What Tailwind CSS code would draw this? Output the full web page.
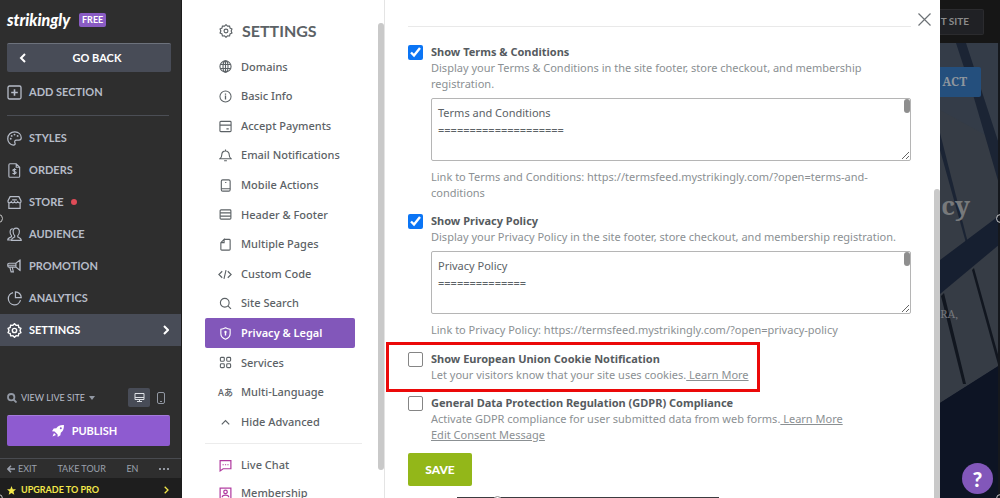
<!DOCTYPE html>
<html lang="en">
  <head>
    <meta charset="UTF-8" />
    <meta name="viewport" content="width=device-width, initial-scale=1.0" />
    <title>Settings - Privacy &amp; Legal</title>
    <script src="https://cdn.jsdelivr.net/npm/@tailwindcss/browser@4"></script>
  </head>
  <body class="relative flex h-screen overflow-hidden bg-white font-['Noto_Sans',sans-serif] text-[11px] text-[#5c6266]">
    <!-- Editor sidebar -->
    <aside class="flex w-[182px] shrink-0 flex-col border-r border-[#1c1c1c] bg-[#2e2e2e] font-['Lato',sans-serif] text-[11px] font-bold text-[#b6bcc8]">
      <header class="flex h-10 items-center gap-2 pl-[7px]">
        <span class="w-16 font-['Lato',sans-serif] text-[16px] font-black italic text-white">strikingly</span>
        <span class="rounded-xs bg-[#8a5cc4] px-[3px] text-[9px] leading-[14px] text-white">FREE</span>
      </header>
      <button class="relative mt-[3px] ml-[7px] h-[29px] w-[164px] rounded-xs border-t border-[#6d727c] bg-[#484c57] pl-4 text-white">
        <svg class="absolute top-[9px] left-3 h-[10px] w-[7px]" viewBox="0 0 7 10" fill="none" stroke="currentColor" stroke-width="2"><path d="M6 1 2 5l4 4" /></svg>
        GO BACK
      </button>
      <button class="mt-1 flex h-8 items-center gap-[7px] pt-px pl-[7px]">
        <svg class="size-[15px]" viewBox="0 0 15 15" fill="none" stroke="currentColor" stroke-width="1.3"><rect x="1" y="1" width="13" height="13" rx="1.5" /><path d="M7.500 4.200v6.600M4.200 7.500h6.600" stroke-width="1.600" /></svg>
        ADD SECTION
      </button>
      <hr class="mt-[7px] mr-3 mb-[6px] ml-[7px] border-[#4b4e55]" />
      <nav>
        <a href="#" class="flex h-8 items-center gap-[7px] pl-[7px]">
          <svg class="size-[15px]" viewBox="0 0 16 16" fill="none" stroke="currentColor" stroke-width="1.300"><path d="M8.500 1C4 .8.800 4 .800 8.200c0 3.700 2.700 6.800 5.900 6.800 2 0 2.300-1.300 1.800-2.300-.8-1.600-.2-3 1.700-3h2.600c1.600 0 2.400-.9 2.400-2.400C15.200 3.700 12.400 1.200 8.500 1Z" /><g fill="currentColor" stroke="none"><circle cx="4" cy="8.300" r="1" /><circle cx="5" cy="5.200" r="1" /><circle cx="8" cy="3.800" r="1" /><circle cx="11.300" cy="5.200" r="1" /></g></svg>
          STYLES
        </a>
        <a href="#" class="flex h-8 items-center gap-[7px] pl-[7px]">
          <svg class="size-[15px]" viewBox="0 0 16 16" fill="none" stroke="currentColor" stroke-width="1.200"><path d="M3.200.8h6.600l3.700 3.700v9.500c0 .7-.5 1.200-1.200 1.200H3.200c-.7 0-1.200-.5-1.200-1.200V2C2 1.300 2.500.8 3.200.8ZM9.800.8v3.700h3.700" /><path d="M9.800 7.200c-.5-.6-3.600-.9-3.600.6 0 1.700 3.600.7 3.600 2.400 0 1.500-3.100 1.400-3.800.5M8 5.500v7" /></svg>
          ORDERS
        </a>
        <a href="#" class="flex h-8 items-center gap-[7px] pl-[7px]">
          <svg class="size-[15px]" viewBox="0 0 16 16" fill="none" stroke="currentColor" stroke-width="1.300"><path d="M3.300 1.800h9.400l2.200 4.200v1.200c0 1.600-2.700 1.600-3.500 0-.8 1.600-2.600 1.600-3.400 0-.8 1.600-2.600 1.600-3.400 0-.8 1.600-3.500 1.600-3.500 0V6ZM2 8.800v5.400h12V8.800M5.500 5.200h5" /></svg>
          STORE
          <span class="size-[6px] rounded-full bg-[#df4b57]"></span>
        </a>
        <a href="#" class="flex h-8 items-center gap-[7px] pl-[7px]">
          <svg class="size-[15px]" viewBox="0 0 16 16" fill="none" stroke="currentColor" stroke-width="1.200"><path d="M6.300 1.800c-2.200 0-3 1.600-3 3.400 0 1.700.6 3 1.500 3.900v1.400c-1.700.7-4 1.100-4 3.300h4" /><path d="M9.800 1.200c-2.300 0-3.300 1.600-3.300 3.700 0 1.900.7 3.400 1.700 4.300v1.500c-1.600.7-3.500 1.100-3.500 3.600h10.500c0-2.500-2-2.900-3.700-3.600V9.200c1-.9 1.700-2.400 1.700-4.300 0-2.100-1.100-3.700-3.400-3.700Z" /></svg>
          AUDIENCE
        </a>
        <a href="#" class="flex h-8 items-center gap-[7px] pl-[7px]">
          <svg class="size-[15px]" viewBox="0 0 16 16" fill="none" stroke="currentColor" stroke-width="1.200"><path d="M9.500 4.500H2.200c-.8 0-1.400.6-1.400 1.400v1.400c0 .8.600 1.400 1.400 1.400h7.300L13.700 12V1.200ZM9.500 4.500v4.200M1 6.600h8.500M3 8.700l1.400 5h2.400L5.600 8.700M14 .8v11.600" /></svg>
          PROMOTION
        </a>
        <a href="#" class="flex h-8 items-center gap-[7px] pl-[7px]">
          <svg class="size-[15px]" viewBox="0 0 16 16" fill="none" stroke="currentColor" stroke-width="1.300"><path d="M6.500 1.700a6.600 6.600 0 1 0 7.900 8.100M9 .9v6.200h6.200A6.200 6.200 0 0 0 9 .9Z" /></svg>
          ANALYTICS
        </a>
        <a href="#" class="flex h-8 items-center gap-[7px] bg-[#484c57] pr-3 pl-[7px] text-white">
          <svg class="size-[15px]" viewBox="0 0 16 16" fill="none" stroke="currentColor" stroke-width="1.500"><path d="m8 .8 1.700 1.700 2.400-.2.500 2.400 2.200 1-.9 2.300.9 2.300-2.200 1-.5 2.400-2.400-.2L8 15.200l-1.700-1.700-2.400.2-.5-2.400-2.200-1L2.100 8l-.9-2.300 2.200-1 .5-2.400 2.400.2Z" /><circle cx="8" cy="8" r="2.300" /></svg>
          <span class="flex-1">SETTINGS</span>
          <svg class="h-[10px] w-[6px]" viewBox="0 0 6 10" fill="none" stroke="currentColor" stroke-width="2"><path d="m1 1 4 4-4 4" /></svg>
        </a>
      </nav>
      <footer class="mt-auto">
        <div class="flex h-[19px] items-center pr-4 pl-[7px] text-[9px] font-normal">
          <svg class="mr-1 size-[10px] text-[#9298a3]" viewBox="0 0 10 10" fill="none" stroke="currentColor" stroke-width="1.800"><circle cx="4.200" cy="4.200" r="3.200" /><path d="m6.500 6.500 3 3" /></svg>
          <button class="flex items-center gap-1">VIEW LIVE SITE <span class="border-x-[3px] border-t-[4px] border-x-transparent border-t-[#9298a3]"></span></button>
          <button class="ml-auto flex h-[19px] w-[22px] items-center justify-center rounded-xs bg-[#484c57]" aria-label="Desktop preview">
            <svg class="size-[11px]" viewBox="0 0 11 11" fill="none" stroke="#dde0e5"><path d="M1 1.500h9v6H1ZM1 5.500h9M5.500 7.500v2M3 9.500h5" /></svg>
          </button>
          <button class="ml-[7px]" aria-label="Mobile preview">
            <svg class="h-3 w-2" viewBox="0 0 8 12" fill="none" stroke="#9298a3"><rect x=".5" y=".5" width="7" height="11" rx="1.500" /><path d="M3 9.500h2" /></svg>
          </button>
        </div>
        <button class="mt-2 ml-[7px] flex h-[31px] w-[163px] items-center justify-center gap-2 rounded-xs border-t border-[#a47bdb] bg-[#8e5bd0] pr-2 text-white">
          <svg class="size-3" viewBox="0 0 12 12" fill="currentColor"><path d="M11.900.1C8.500-.1 6 .8 4.300 3.200L1.700 3.600 0 6.300l2.600.1 3 3 .1 2.600 2.700-1.700.4-2.600C11.200 6 12.100 3.500 11.900.1ZM8.800 4.200a1 1 0 1 1 0-2 1 1 0 0 1 0 2ZM2 8 .5 11.500 4 10Z" fill-rule="evenodd" /></svg>
          PUBLISH
        </button>
        <div class="mt-3 flex h-5 items-center justify-between border-t border-[#494b50] pr-3 pl-[7px] text-[9px] font-normal text-[#9ba1ad]">
          <a href="#" class="flex items-center gap-[3px]"><svg class="size-2" viewBox="0 0 8 8" fill="none" stroke="currentColor" stroke-width="1.500"><path d="M8 4H1M4 .8.9 4 4 7.200" /></svg>EXIT</a>
          <a href="#">TAKE TOUR</a>
          <a href="#">EN</a>
          <button class="flex gap-[2px]" aria-label="More"><i class="size-[2px] rounded-full bg-[#b6bcc8]"></i><i class="size-[2px] rounded-full bg-[#b6bcc8]"></i><i class="size-[2px] rounded-full bg-[#b6bcc8]"></i></button>
        </div>
        <a href="#" class="flex h-5 items-center gap-[5px] bg-[#1e1e1e] pt-1 pr-3 pl-[7px] text-[9px] text-[#f3e84a]">
          <svg class="size-[9px]" viewBox="0 0 10 10" fill="currentColor"><path d="m5 0 1.400 3.500 3.600.2-2.800 2.400.9 3.700L5 7.800 1.900 9.800l.9-3.700L0 3.700l3.600-.2Z" /></svg>
          <span class="flex-1">UPGRADE TO PRO</span>
          <svg class="h-2 w-[5px]" viewBox="0 0 5 8" fill="none" stroke="currentColor" stroke-width="1.300"><path d="m.7.700 3.300 3.300-3.300 3.300" /></svg>
        </a>
      </footer>
    </aside>

    <!-- Settings menu -->
    <section class="relative w-[203px] shrink-0 border-r border-[#e4e4e4] pl-[23px]">
      <h1 class="flex h-[52px] items-center gap-[9px] pt-[10px] pl-[14px] font-['Lato',sans-serif] text-[16px] font-bold text-[#5c6266]">
        <svg class="size-[14px]" viewBox="0 0 16 16" fill="none" stroke="currentColor" stroke-width="1.300"><path d="m8 .8 1.700 1.700 2.400-.2.500 2.400 2.200 1-.9 2.300.9 2.300-2.200 1-.5 2.400-2.400-.2L8 15.200l-1.700-1.700-2.400.2-.5-2.400-2.200-1L2.100 8l-.9-2.300 2.200-1 .5-2.400 2.400.2Z" /><circle cx="8" cy="8" r="2.200" /></svg>
        SETTINGS
      </h1>
      <nav class="flex h-[385px] w-[150px] flex-col font-medium *:flex *:flex-1 *:items-center *:gap-[9px] *:pl-[14px]">
        <a href="#"><svg class="size-[13px]" viewBox="0 0 14 14" fill="none" stroke="currentColor" stroke-width="1.200"><circle cx="7" cy="7" r="6" /><ellipse cx="7" cy="7" rx="2.700" ry="6" /><path d="M1.500 4.800h11M1.500 9.200h11M7 1v12" /></svg>Domains</a>
        <a href="#"><svg class="size-[13px]" viewBox="0 0 14 14" fill="none" stroke="currentColor" stroke-width="1.100"><circle cx="7" cy="7" r="6" /><path d="M7 6v4.200M7 3.700v1.300" stroke-width="1.400" /></svg>Basic Info</a>
        <a href="#"><svg class="size-[13px]" viewBox="0 0 14 14" fill="none" stroke="currentColor" stroke-width="1.200"><rect x="1" y="1.500" width="12" height="11" rx="1" /><path d="M1 5.500h12M8 9.500h2.500" /></svg>Accept Payments</a>
        <a href="#"><svg class="size-[13px]" viewBox="0 0 14 14" fill="none" stroke="currentColor" stroke-width="1.200"><path d="M1 10.500h12c-1.700-1-2-2.300-2-4.300C11 3.700 9.300 2.200 7 2.200S3 3.700 3 6.200c0 2-.3 3.300-2 4.300ZM7 .6v1.600M5.500 12.600h3" /></svg>Email Notifications</a>
        <a href="#"><svg class="size-[13px]" viewBox="0 0 14 14" fill="none" stroke="currentColor" stroke-width="1.200"><rect x="2.500" y="1" width="9.500" height="12" rx="1.500" /><path d="M2.500 10.500H12M6.600 3.800h1.300" /></svg>Mobile Actions</a>
        <a href="#"><svg class="size-[13px]" viewBox="0 0 14 14" fill="none" stroke="currentColor" stroke-width="1.200"><rect x="1.200" y="2" width="11.600" height="10" rx="1" /><path d="M1.200 5.300h11.600M1.200 8.700h11.600" /></svg>Header &amp; Footer</a>
        <a href="#"><svg class="size-[13px]" viewBox="0 0 14 14" fill="none" stroke="currentColor" stroke-width="1.200"><path d="M5.500 1.500H11c.6 0 1 .4 1 1V12c0 .6-.4 1-1 1H3c-.6 0-1-.4-1-1V5l3.500-3.500V5H2" /></svg>Multiple Pages</a>
        <a href="#"><svg class="-ml-px h-[13px] w-[14px]" viewBox="0 0 15 14" fill="none" stroke="currentColor" stroke-width="1.200"><path d="M4.500 3.500.9 7l3.600 3.500M10.500 3.500 14.100 7l-3.600 3.500M8.600 2.200 6.400 11.800" /></svg>Custom Code</a>
        <a href="#"><svg class="size-[13px]" viewBox="0 0 14 14" fill="none" stroke="currentColor" stroke-width="1.200"><circle cx="6.200" cy="6.200" r="4.700" /><path d="m9.600 9.600 3.300 3.300" /></svg>Site Search</a>
        <a href="#" class="rounded-xs bg-[#8257ba] font-semibold text-white"><svg class="size-[13px]" viewBox="0 0 14 14" fill="none" stroke="currentColor" stroke-width="1.200"><path d="M7 .9c-1.600 1-3.200 1.500-5 1.500v4.800C2 10 4 12 7 13.200c3-1.200 5-3.200 5-6V2.400C10.200 2.400 8.600 1.900 7 .9Z" /><path d="M7 5v4.200" stroke-width="1.500" /><circle cx="7" cy="5.300" r="1.200" fill="currentColor" stroke="none" /></svg>Privacy &amp; Legal</a>
        <a href="#"><svg class="size-[13px]" viewBox="0 0 14 14" fill="none" stroke="currentColor" stroke-width="1.200"><rect x="1.500" y="1.500" width="4.200" height="4.200" rx="1" /><rect x="8.300" y="1.500" width="4.200" height="4.200" rx="1" /><rect x="1.500" y="8.300" width="4.200" height="4.200" rx="1" /><rect x="8.300" y="8.300" width="4.200" height="4.200" rx="1" /></svg>Services</a>
        <a href="#"><span class="-ml-px flex w-[14px] text-[9px] whitespace-nowrap">A<span class="font-['Noto_Sans_CJK_JP',sans-serif]">あ</span></span>Multi-Language</a>
        <button><svg class="size-[13px]" viewBox="0 0 14 14" fill="none" stroke="currentColor" stroke-width="1.300"><path d="m3 9 4-4 4 4" /></svg>Hide Advanced</button>
      </nav>
      <nav class="mt-[6px] mr-[22px] flex flex-col border-t border-[#ececec] pt-[7px] font-medium">
        <a href="#" class="flex h-7 items-center gap-[9px] pl-[14px]"><svg class="size-[13px]" viewBox="0 0 14 14" fill="none" stroke="#b0399f" stroke-width="1.300"><path d="M1.200 1.800h11.600v8.700H4.500L1.200 12.800Z" /><path d="M3.800 6.200h1.300M6.400 6.200h1.300M9 6.200h1.300" /></svg>Live Chat</a>
        <a href="#" class="flex h-7 items-center gap-[9px] pl-[14px]"><svg class="size-[13px]" viewBox="0 0 14 14" fill="none" stroke="#b0399f" stroke-width="1.300"><rect x="1.200" y="1.200" width="11.600" height="11.600" /><circle cx="7" cy="5.300" r="1.900" /><path d="M3.500 11c0-3 7-3 7 0" /></svg>Membership</a>
      </nav>
      <div class="absolute top-[23px] right-0 h-[447px] w-[6px] rounded-full bg-[#c9c9c9]"></div>
    </section>

    <!-- Privacy & Legal panel -->
    <main class="relative min-w-0 flex-1 pr-[29px] pl-[23px] text-[#8b9093]">
      <hr class="mt-[26px] border-[#e9e9e9]" />
      <button class="absolute top-[13px] right-[9px]" aria-label="Close">
        <svg class="size-[13px]" viewBox="0 0 13 13" fill="none" stroke="#6d7276" stroke-width="1.200"><path d="m.5.500 12 12M12.500.500l-12 12" /></svg>
      </button>
      <form>
        <div class="flex gap-2 pt-[17px]">
          <input id="terms" type="checkbox" checked class="mt-px size-[15px] shrink-0 accent-[#0b75f5]" />
          <div class="flex-1 leading-4">
            <label for="terms" class="block font-bold text-[#565b60]">Show Terms &amp; Conditions</label>
            <p>Display your Terms &amp; Conditions in the site footer, store checkout, and membership registration.</p>
            <div class="relative mt-[6px]">
              <textarea aria-label="Terms and Conditions" class="block h-[63px] w-full resize overflow-hidden rounded-xs border border-[#b5b5b5] px-[6px] pt-[5px] leading-[17px] text-[#5c6266]">Terms and Conditions
====================

Last updated</textarea>
              <div class="absolute top-px right-px h-[14px] w-[6px] rounded-full bg-[#8e8e8e]"></div>
            </div>
            <p class="mt-2">Link to Terms and Conditions: https://termsfeed.mystrikingly.com/?open=terms-and-conditions</p>
          </div>
        </div>
        <div class="flex gap-2 pt-3">
          <input id="privacy" type="checkbox" checked class="mt-px size-[15px] shrink-0 accent-[#0b75f5]" />
          <div class="flex-1 leading-4">
            <label for="privacy" class="block font-bold text-[#565b60]">Show Privacy Policy</label>
            <p>Display your Privacy Policy in the site footer, store checkout, and membership registration.</p>
            <div class="relative mt-[6px]">
              <textarea aria-label="Privacy Policy" class="block h-[63px] w-full resize overflow-hidden rounded-xs border border-[#b5b5b5] px-[6px] pt-[5px] leading-[17px] text-[#5c6266]">Privacy Policy
==============

Last updated</textarea>
              <div class="absolute top-px right-px h-[14px] w-[6px] rounded-full bg-[#8e8e8e]"></div>
            </div>
            <p class="mt-2">Link to Privacy Policy: https://termsfeed.mystrikingly.com/?open=privacy-policy</p>
          </div>
        </div>
        <div class="mt-1 -ml-[22px] flex h-[50px] w-[374px] gap-2 border-[3px] border-[#eb0909] pt-[6px] pl-[19px]">
          <input id="cookies" type="checkbox" class="mt-px size-[15px] shrink-0 appearance-none rounded-xs border border-[#858585]" />
          <div class="leading-4">
            <label for="cookies" class="block font-bold text-[#565b60]">Show European Union Cookie Notification</label>
            <p>Let your visitors know that your site uses cookies.<a href="#" class="underline"> Learn More</a></p>
          </div>
        </div>
        <div class="flex gap-2 pt-[3px]">
          <input id="gdpr" type="checkbox" class="mt-px size-[15px] shrink-0 appearance-none rounded-xs border border-[#858585]" />
          <div class="leading-4">
            <label for="gdpr" class="block font-bold text-[#565b60]">General Data Protection Regulation (GDPR) Compliance</label>
            <p>Activate GDPR compliance for user submitted data from web forms.<a href="#" class="underline"> Learn More</a></p>
            <a href="#" class="underline">Edit Consent Message</a>
          </div>
        </div>
        <button type="submit" class="mt-[10px] h-[33px] w-16 rounded-xs bg-[#93b719] font-['Lato',sans-serif] text-[12px] font-black text-white">SAVE</button>
      </form>
      <div class="absolute top-[189px] right-0 bottom-0 w-[6px] rounded-t-full bg-[#c9c9c9]"></div>
      <div class="absolute bottom-0 left-[72px] h-px w-[262px] bg-[#3c3c40]"></div>
      <div class="absolute -bottom-[7px] left-[108px] size-[9px] rounded-full border border-[#8d8d8d] bg-white"></div>
    </main>

    <!-- Dimmed site preview -->
    <section class="relative w-[60px] shrink-0 overflow-hidden bg-[#10182a]">
      <svg class="absolute inset-0 h-full w-full" viewBox="0 0 60 498" preserveAspectRatio="none">
        <path d="M0 43h60v322L0 403Z" fill="#363c45" />
        <path d="M0 43h60v100L0 110Z" fill="#343c48" />
        <path d="M16 43h10l33 101v40L34 98Z" fill="#1b2434" />
        <path d="m0 133 28 110h-2L0 150Z" fill="#1b2434" />
        <path d="m60 215-60 45v34l60-50Z" fill="#161f30" />
        <path d="m34 268 25 90v10L32 270ZM4 293l22 91h-3L1 296Z" fill="#11161f" />
        <path d="M0 403 60 365v133H0Z" fill="#0d1424" />
        <path d="M58 43h2v455h-2Z" fill="#15181d" />
      </svg>
      <div class="relative flex h-[43px] items-center justify-end bg-[#161616] pr-4">
        <button class="h-[26px] w-11 rounded-r-xs border border-l-0 border-[#2b2b2e] bg-[#202125] pr-[14px] text-right font-['Lato',sans-serif] text-[10px] font-bold whitespace-nowrap text-[#8b8b8b]">T SITE</button>
      </div>
      <a href="#" class="relative mt-6 mr-[19px] flex h-[30px] items-center justify-end rounded-r-xs bg-[#244f7d] pr-[14px] font-['Noto_Serif','Liberation_Serif',serif] text-[12px] font-bold text-[#8f969e]">ACT</a>
      <p class="relative mt-[86px] mr-[30px] flex justify-end font-['Noto_Serif','DejaVu_Serif',serif] text-[26px] leading-[44px] font-bold text-[#77797b]">cy</p>
      <p class="relative mt-[79px] mr-[42px] flex justify-end font-['Noto_Serif','Liberation_Serif',serif] text-[11px] leading-4 text-[#74777c]">RA,</p>
      <button class="absolute right-[7px] bottom-1 size-[31px] rounded-full bg-[#8257ba] text-center font-['Lato',sans-serif] text-[21px] leading-[31px] font-black text-white">?</button>
    </section>

    <!-- Resize handles -->
    <i class="absolute top-[214px] -left-[6px] size-[9px] rounded-full border border-[#c8c8c8]"></i>
    <i class="absolute top-[214px] -right-[5px] size-[9px] rounded-full border border-[#c8c8c8]"></i>
    <i class="absolute -bottom-[5px] -left-[6px] size-[9px] rounded-full border border-[#c8c8c8]"></i>
    <i class="absolute -right-[5px] -bottom-[5px] size-[9px] rounded-full border border-[#c8c8c8]"></i>
  </body>
</html>
